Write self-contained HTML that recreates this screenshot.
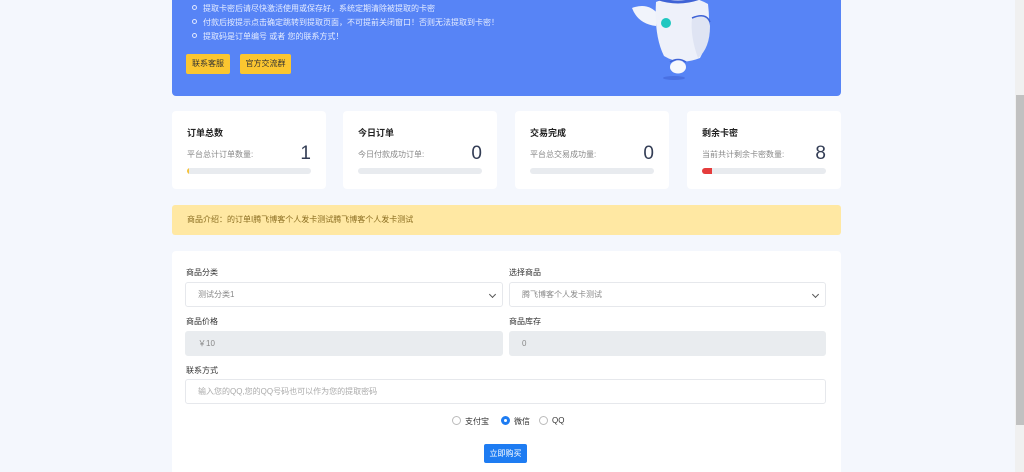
<!DOCTYPE html>
<html><head><meta charset="utf-8"><style>
*{box-sizing:border-box;margin:0;padding:0}
html,body{width:1024px;height:472px;overflow:hidden}
body{background:#f4f7fd;font-family:"Liberation Sans","Noto Sans CJK SC",sans-serif;position:relative;color:#333}
.abs{position:absolute}
.banner{left:172px;top:-4px;width:669px;height:100px;background:#5784f6;border-radius:4px}
.banner ul{position:absolute;left:20px;top:6px;list-style:none;color:#e6edff;font-size:8px;line-height:14px}
.banner li:before{content:"";display:inline-block;width:3px;height:3px;border:1px solid #dfe7ff;border-radius:50%;margin-right:6px;vertical-align:1px}
.btn{position:absolute;top:58px;height:20px;background:#fbc630;color:#333;font-size:8px;line-height:20px;text-align:center;border-radius:2px}
.card{background:#fff;border-radius:4px;top:111px;width:154px;height:78px}
.card .t{position:absolute;left:15px;top:15px;font-size:9px;color:#222;font-weight:bold}
.card .s{position:absolute;left:15px;top:38px;font-size:8px;color:#888}
.card .n{position:absolute;right:15px;top:32px;font-size:19px;color:#333d55}
.card .bar{position:absolute;left:15px;right:15px;top:57px;height:6px;background:#e8ebef;border-radius:3px;overflow:hidden}
.note{left:172px;top:205px;width:669px;height:30px;background:#ffe8a3;border-radius:3px;font-size:8px;color:#8a6d20;line-height:30px;padding-left:15px}
.form{left:172px;top:251px;width:669px;height:230px;background:#fff;border-radius:4px}
.lbl{position:absolute;font-size:8px;color:#333}
.inp{position:absolute;height:25px;border:1px solid #e6e8ec;border-radius:3px;font-size:8px;color:#888;line-height:23px;padding-left:12px}
.gray{background:#e9ecef;border-color:#e9ecef}
.chev{position:absolute;right:7px;top:9px;width:5px;height:5px;border-right:1px solid #555;border-bottom:1px solid #555;transform:rotate(45deg)}
.radio{position:absolute;top:416px;width:9px;height:9px;border:1px solid #bbb;border-radius:50%}
.rl{position:absolute;top:416px;font-size:8px;color:#333}
</style></head><body>
<div class="abs banner">
<ul><li>提取卡密后请尽快激活使用或保存好，系统定期清除被提取的卡密</li><li>付款后按提示点击确定跳转到提取页面，不可提前关闭窗口！否则无法提取到卡密！</li><li>提取码是订单编号 或者 您的联系方式！</li></ul>
<div class="btn" style="left:14px;width:44px">联系客服</div>
<div class="btn" style="left:68px;width:51px">官方交流群</div>
<svg class="abs" style="left:456px;top:0" width="100" height="90" viewBox="0 0 100 90">
<ellipse cx="46" cy="82" rx="11" ry="2" fill="#3f63d6" opacity=".6"/>
<path d="M4 12 Q20 6 30 18 L28 30 Q10 28 4 12Z" fill="#f1f4fb"/>
<path d="M28 6 Q55 -6 80 8 Q84 40 72 62 Q52 70 36 60 Q26 40 28 6Z" fill="#eef1fa"/>
<path d="M64 22 Q80 16 82 30 Q82 52 70 62 Q62 40 64 22Z" fill="#dfe4f3"/>
<path d="M64 22 Q78 16 82 26" stroke="#3f63d6" stroke-width="1.5" fill="none"/>
<path d="M28 2 Q50 10 72 2" stroke="#3f63d6" stroke-width="3" fill="none"/>
<circle cx="38" cy="27" r="5" fill="#1fc7c0"/>
<ellipse cx="50" cy="71" rx="8" ry="6.5" fill="#f6f8fd"/>
<path d="M42 66 Q50 61 58 66" stroke="#3f63d6" stroke-width="1.5" fill="none"/>
</svg>
</div>
<div class="abs card" style="left:172px"><div class="t">订单总数</div><div class="s">平台总计订单数量:</div><div class="n">1</div><div class="bar"><div style="width:2px;height:6px;background:#f5c33b"></div></div></div>
<div class="abs card" style="left:343px"><div class="t">今日订单</div><div class="s">今日付款成功订单:</div><div class="n">0</div><div class="bar"></div></div>
<div class="abs card" style="left:515px"><div class="t">交易完成</div><div class="s">平台总交易成功量:</div><div class="n">0</div><div class="bar"></div></div>
<div class="abs card" style="left:687px"><div class="t">剩余卡密</div><div class="s">当前共计剩余卡密数量:</div><div class="n">8</div><div class="bar"><div style="width:10px;height:6px;background:#e53c3c"></div></div></div>
<div class="abs note">商品介绍：的订单I腾飞博客个人发卡测试腾飞博客个人发卡测试</div>
<div class="abs form"></div>
<div class="lbl" style="left:186px;top:267px">商品分类</div>
<div class="lbl" style="left:509px;top:267px">选择商品</div>
<div class="inp" style="left:185px;top:282px;width:318px">测试分类1<span class="chev"></span></div>
<div class="inp" style="left:509px;top:282px;width:317px">腾飞博客个人发卡测试<span class="chev"></span></div>
<div class="lbl" style="left:186px;top:316px">商品价格</div>
<div class="lbl" style="left:509px;top:316px">商品库存</div>
<div class="inp gray" style="left:185px;top:331px;width:318px">￥10</div>
<div class="inp gray" style="left:509px;top:331px;width:317px">0</div>
<div class="lbl" style="left:186px;top:365px">联系方式</div>
<div class="inp" style="left:185px;top:379px;width:641px;color:#aaa">输入您的QQ,您的QQ号码也可以作为您的提取密码</div>
<div class="radio" style="left:452px"></div><div class="rl" style="left:465px">支付宝</div>
<div class="radio" style="left:501px;border:3px solid #1e7cf2"></div><div class="rl" style="left:514px">微信</div>
<div class="radio" style="left:539px"></div><div class="rl" style="left:552px">QQ</div>
<div class="abs" style="left:484px;top:444px;width:43px;height:19px;background:#1e7cf2;border-radius:2px;color:#fff;font-size:8px;line-height:19px;text-align:center">立即购买</div>
<div class="abs" style="left:1015px;top:0;width:9px;height:472px;background:#f0f0f0"></div>
<div class="abs" style="left:1016px;top:95px;width:8px;height:330px;background:#c1c1c1"></div>
</body></html>
